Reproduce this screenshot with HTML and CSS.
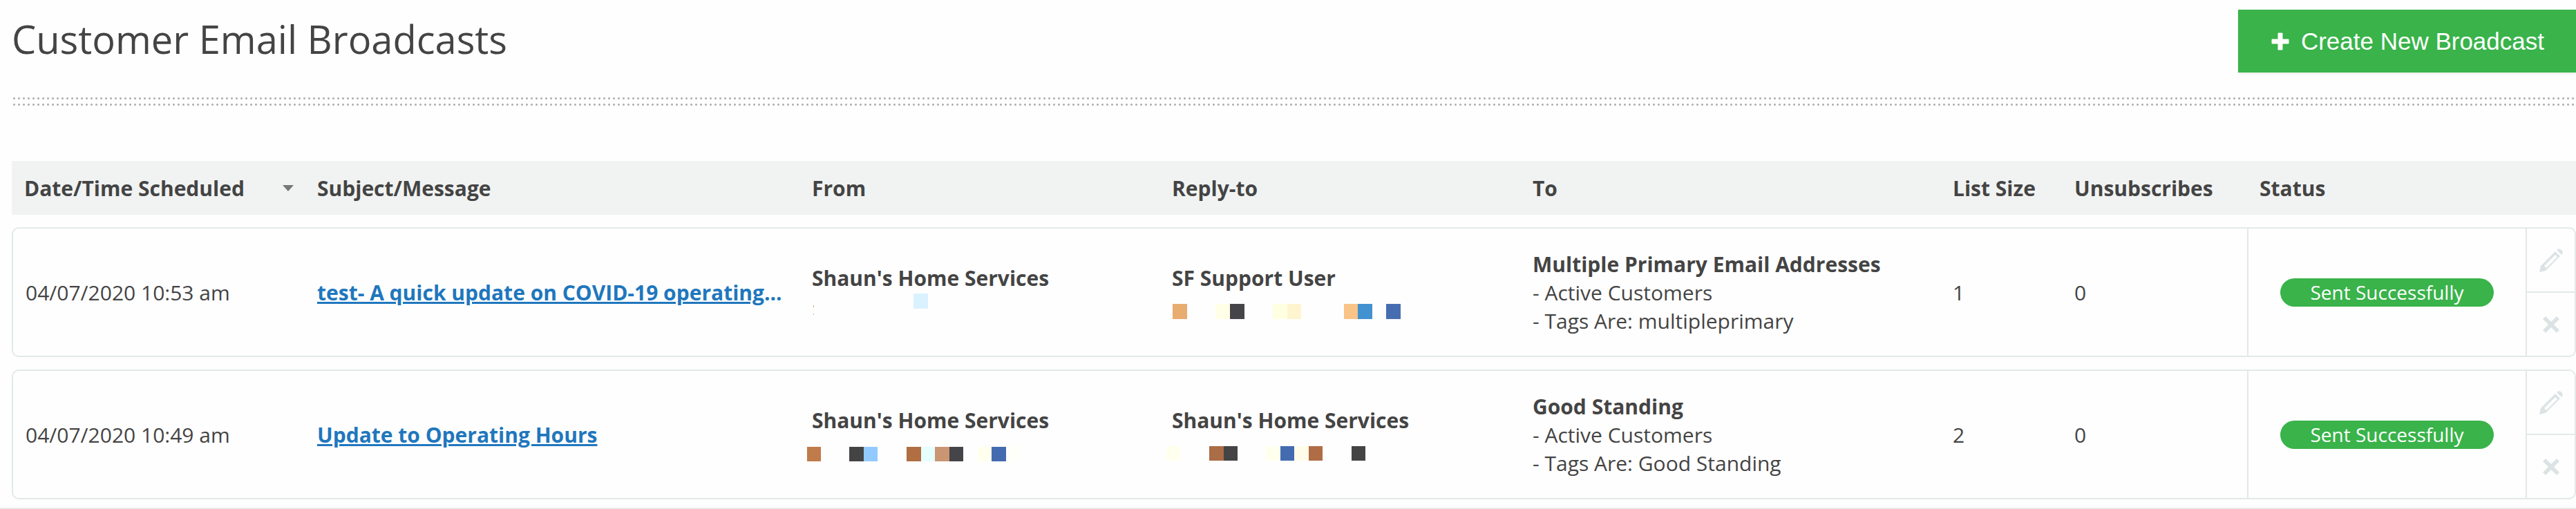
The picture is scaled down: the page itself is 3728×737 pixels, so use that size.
FILE: index.html
```html
<!DOCTYPE html>
<html lang="en">
<head>
    <meta charset="UTF-8">
    <meta name="viewport" content="width=device-width, initial-scale=1.0">
    <title>Customer Email Broadcasts</title>
    <link rel="stylesheet" href="styles.css">
</head>
<body>
    <!-- shared icons -->
    <svg class="icon-defs" width="0" height="0" aria-hidden="true">
        <symbol id="icon-pencil" viewBox="0 0 34 34">
            <path fill-rule="evenodd" d="M0 34L2 25L23 4L30 11L9 32ZM7 25L10 28L26 12L23 9Z"/>
            <path d="M25 2Q28 -1 31 1L33 3Q35 6 32 9Z"/>
        </symbol>
        <symbol id="icon-delete" viewBox="0 0 24 24">
            <path d="M4 0L12 8L20 0L24 4L16 12L24 20L20 24L12 16L4 24L0 20L8 12L0 4Z"/>
        </symbol>
    </svg>

    <div class="page">
        <header class="page-header">
            <h1>Customer Email Broadcasts</h1>
            <button type="button" class="create-button">
                <svg width="26" height="26" viewBox="0 0 26 26" aria-hidden="true"><path d="M10 1h6v9h9v6h-9v9h-6v-9H1v-6h9z" fill="#fff" stroke="#fff" stroke-linejoin="round"/></svg>
                Create New Broadcast
            </button>
        </header>
        <div class="divider"></div>

        <table class="broadcasts">
            <colgroup>
                <col class="col-date">
                <col class="col-subject">
                <col class="col-from">
                <col class="col-reply">
                <col class="col-to">
                <col class="col-size">
                <col class="col-unsub">
                <col class="col-status">
                <col class="col-actions">
            </colgroup>
            <thead>
                <tr>
                    <th><div class="sortable">Date/Time Scheduled <span class="sort-arrow"></span></div></th>
                    <th>Subject/Message</th>
                    <th>From</th>
                    <th>Reply-to</th>
                    <th>To</th>
                    <th>List Size</th>
                    <th>Unsubscribes</th>
                    <th>Status</th>
                    <th></th>
                </tr>
            </thead>
            <tbody>
                <tr>
                    <td>04/07/2020 10:53 am</td>
                    <td class="subject"><a href="#">test- A quick update on COVID-19 operating</a>...</td>
                    <td>
                        <strong>Shaun's Home Services</strong>
                        <svg class="masked" width="360" height="41" aria-hidden="true">
                            <rect x="157" y="2" width="21" height="22" fill="#daf2ff"/>
                            <path d="M12 19h1v3h-1zM12 31h1v2h-1z" fill="#d9ab7a"/>
                        </svg>
                    </td>
                    <td>
                        <strong>SF Support User</strong>
                        <svg class="masked" width="360" height="41" aria-hidden="true">
                            <rect x="11" y="17" width="21" height="22" fill="#e8ab70"/>
                            <rect x="73" y="17" width="21" height="22" fill="#ffffe8"/>
                            <rect x="94" y="17" width="21" height="22" fill="#454449"/>
                            <rect x="156" y="17" width="21" height="22" fill="#ffffe1"/>
                            <rect x="177" y="17" width="20" height="22" fill="#fff4d0"/>
                            <rect x="259" y="17" width="20" height="22" fill="#fac388"/>
                            <rect x="279" y="17" width="21" height="22" fill="#4291d0"/>
                            <rect x="320" y="17" width="21" height="22" fill="#476db1"/>
                        </svg>
                    </td>
                    <td>
                        <strong>Multiple Primary Email Addresses</strong>
                        - Active Customers<br>
                        - Tags Are: multipleprimary
                    </td>
                    <td>1</td>
                    <td>0</td>
                    <td class="status"><span class="pill">Sent Successfully</span></td>
                    <td class="actions">
                        <button type="button" aria-label="Edit"><svg width="34" height="34"><use href="#icon-pencil"/></svg></button>
                        <button type="button" aria-label="Delete"><svg width="24" height="24"><use href="#icon-delete"/></svg></button>
                    </td>
                </tr>
                <tr>
                    <td>04/07/2020 10:49 am</td>
                    <td class="subject"><a href="#">Update to Operating Hours</a></td>
                    <td>
                        <strong>Shaun's Home Services</strong>
                        <svg class="masked" width="360" height="41" aria-hidden="true">
                            <rect x="3" y="18" width="20" height="21" fill="#bf7b49"/>
                            <rect x="64" y="18" width="21" height="21" fill="#444444"/>
                            <rect x="85" y="18" width="20" height="21" fill="#92caff"/>
                            <rect x="147" y="18" width="21" height="21" fill="#b06e42"/>
                            <rect x="168" y="18" width="20" height="21" fill="#e5ffff"/>
                            <rect x="188" y="18" width="21" height="21" fill="#c99573"/>
                            <rect x="209" y="18" width="20" height="21" fill="#454449"/>
                            <rect x="250" y="18" width="20" height="21" fill="#ffffed"/>
                            <rect x="270" y="18" width="21" height="21" fill="#446bb0"/>
                            <rect x="291" y="18" width="21" height="21" fill="#fffffa"/>
                        </svg>
                    </td>
                    <td>
                        <strong>Shaun's Home Services</strong>
                        <svg class="masked" width="360" height="41" aria-hidden="true">
                            <rect x="2" y="17" width="20" height="21" fill="#ffffed"/>
                            <rect x="64" y="17" width="21" height="21" fill="#aa6d45"/>
                            <rect x="85" y="17" width="20" height="21" fill="#444444"/>
                            <rect x="146" y="17" width="21" height="21" fill="#ffffed"/>
                            <rect x="167" y="17" width="20" height="21" fill="#446bb0"/>
                            <rect x="187" y="17" width="21" height="21" fill="#fffde9"/>
                            <rect x="208" y="17" width="20" height="21" fill="#b06d45"/>
                            <rect x="270" y="17" width="20" height="21" fill="#444444"/>
                        </svg>
                    </td>
                    <td>
                        <strong>Good Standing</strong>
                        - Active Customers<br>
                        - Tags Are: Good Standing
                    </td>
                    <td>2</td>
                    <td>0</td>
                    <td class="status"><span class="pill">Sent Successfully</span></td>
                    <td class="actions">
                        <button type="button" aria-label="Edit"><svg width="34" height="34"><use href="#icon-pencil"/></svg></button>
                        <button type="button" aria-label="Delete"><svg width="24" height="24"><use href="#icon-delete"/></svg></button>
                    </td>
                </tr>
            </tbody>
        </table>
    </div>
    <div class="page-end"></div>
</body>
</html>
```

FILE: styles.css
```css
* {
    box-sizing: border-box;
}
body {
    margin: 0;
    background-color: #fefefe;
    color: #444;
    font-family: "Open Sans", sans-serif;
    font-size: 30px;
    line-height: 41px;
}
.icon-defs {
    display: none;
}
.page {
    padding: 14px 0 0 17px;
}
.page-header {
    display: flex;
    justify-content: space-between;
    align-items: flex-start;
}
h1 {
    margin: 0;
    font-size: 56px;
    font-weight: 400;
    line-height: 84px;
}
.create-button {
    display: flex;
    align-items: center;
    gap: 17px;
    height: 91px;
    padding: 0 46px 0 48px;
    border: 0;
    background-color: #39b34a;
    box-shadow: 0 2px 4px rgba(0, 0, 0, 0.08);
    color: #fff;
    font-family: "Liberation Sans", Arial, sans-serif;
    font-size: 35px;
}
/* two rows of dots */
.divider {
    height: 18px;
    margin-top: 33px;
    background-image: radial-gradient(circle, #b0b0b0 1px, transparent 2px);
    background-size: 7px 9px;
}

/* broadcast list */
.broadcasts {
    width: 100%;
    margin-top: 59px;
    table-layout: fixed;
    border-collapse: separate;
    border-spacing: 0 18px;
}
.col-date { width: 424px; }
.col-subject { width: 716px; }
.col-from { width: 521px; }
.col-reply { width: 522px; }
.col-to { width: 608px; }
.col-size { width: 176px; }
.col-unsub { width: 268px; }
.col-status { width: 403px; }
.col-actions { width: 73px; }

th {
    height: 78px;
    padding: 0 18px;
    background-color: #f1f3f2;
    font-weight: 700;
    text-align: left;
    white-space: nowrap;
}
.sortable {
    display: flex;
    align-items: center;
    justify-content: space-between;
}
.sort-arrow {
    margin-right: -2px;
    border: 8px solid transparent;
    border-top: 9px solid #777;
    border-bottom: 0;
}
td {
    padding: 0 18px;
    border: solid #e3e9e9;
    border-width: 2px 0;
    white-space: nowrap;
}
td:first-child {
    border-left-width: 2px;
    border-radius: 10px 0 0 10px;
}
td:last-child {
    border-right-width: 2px;
    border-radius: 0 10px 10px 0;
}
strong {
    display: block;
    font-weight: 700;
}
.subject {
    color: #1f77bd;
    font-weight: 700;
}
.subject a {
    color: inherit;
}
.masked {
    display: block;
    margin-left: -10px;
}
.status {
    border-left-width: 2px;
    text-align: center;
}
.pill {
    display: inline-block;
    width: 309px;
    border-radius: 21px;
    background-color: #39b34a;
    color: #fff;
    font-size: 28px;
}
.actions {
    padding: 0;
    border-left-width: 2px;
}
.actions button {
    display: flex;
    align-items: center;
    justify-content: center;
    width: 100%;
    height: 91px;
    padding: 0;
    border: 0;
    background: none;
    fill: #dce3e4;
}
.actions button + button {
    height: 93px;
    border-top: 2px solid #e3e9e9;
}
.page-end {
    height: 3px;
    margin-top: -6px;
    background-color: #ebebeb;
}
```
